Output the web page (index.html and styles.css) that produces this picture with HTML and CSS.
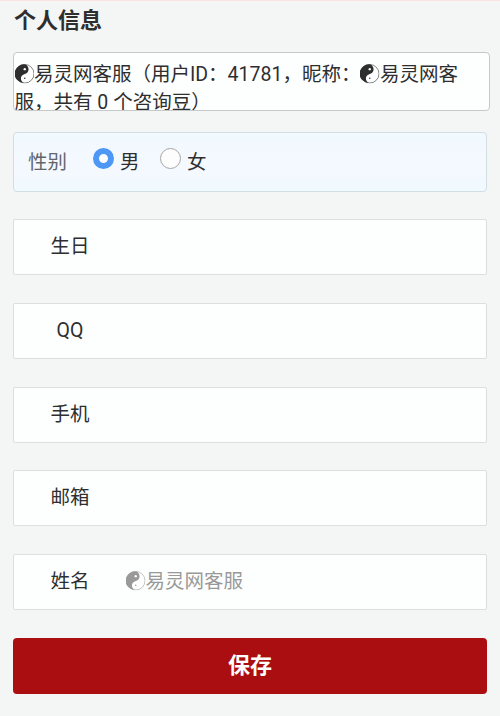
FILE: index.html
```html
<!DOCTYPE html>
<html lang="zh-CN">
<head>
    <meta charset="utf-8">
    <title>个人信息</title>
    <link rel="stylesheet" href="styles.css">
</head>
<body>
    <svg class="sprite" width="0" height="0">
        <symbol id="taiji" viewBox="0 0 20 20">
            <circle cx="10" cy="10" r="9.500" fill="#fff" stroke="currentColor" stroke-width="0.6"/>
            <path d="M11 0.600A9.500 9.500 0 1 0 9 19.400C5.500 17.500 4.500 12.500 9.500 10.500C14 9.500 16 4 11 0.600Z" fill="currentColor"/>
            <circle cx="10" cy="5.300" r="1.200" fill="#fff"/>
            <circle cx="10" cy="14.600" r="0.800" fill="currentColor"/>
        </symbol>
    </svg>
    <h2>个人信息</h2>
    <form>
        <div class="info"><svg class="taiji"><use href="#taiji"/></svg>易灵网客服（用户ID：41781，昵称：<svg class="taiji"><use href="#taiji"/></svg>易灵网客服，共有 0 个咨询豆）</div>
        <div class="sex">
            <span class="sex-title">性别</span>
            <label><input type="radio" name="sex" value="1" checked>男</label>
            <label><input type="radio" name="sex" value="2">女</label>
        </div>
        <div class="row">
            <label class="name" for="birthday">生日</label>
            <input class="text" type="text" id="birthday">
        </div>
        <div class="row">
            <label class="name" for="qq">QQ</label>
            <input class="text" type="text" id="qq">
        </div>
        <div class="row">
            <label class="name" for="mobile">手机</label>
            <input class="text" type="text" id="mobile">
        </div>
        <div class="row">
            <label class="name" for="email">邮箱</label>
            <input class="text" type="text" id="email">
        </div>
        <div class="row">
            <span class="name">姓名</span>
            <span class="nick"><svg class="taiji"><use href="#taiji"/></svg>易灵网客服</span>
        </div>
        <button class="save" type="button">保存</button>
    </form>
</body>
</html>
```
FILE: styles.css
```css
* {
    box-sizing: border-box;
}
body {
    margin: 0;
    padding: 0 13px;
    height: 716px;
    overflow: hidden;
    border-top: 1px solid #f6e3e2;
    background: #f4f5f5;
    color: #2e2e2e;
    font-family: Roboto, "Noto Sans CJK SC", sans-serif;
    font-size: 19.5px;
}
.sprite {
    display: block;
}
h2 {
    margin: 0 0 11px;
    padding-left: 1px;
    height: 40px;
    line-height: 40px;
    font-size: 22px;
}
.info {
    width: 477px;
    height: 59px;
    padding: 8px 20px 0 0.5px;
    overflow: hidden;
    border: 1px solid #c6c9c9;
    border-radius: 4px;
    background: #fdfefe;
    line-height: 27.5px;
}
.taiji {
    display: inline-block;
    width: 19.5px;
    height: 19.5px;
    vertical-align: -2.5px;
}
.sex {
    display: flex;
    height: 60px;
    margin: 21px 0 27px;
    padding-left: 14px;
    border: 1px solid #d3dde4;
    border-radius: 4px;
    background: linear-gradient(#f0faff, #f4f8ff 30%, #f4f8ff 75%, #effaff);
    line-height: 60px;
}
.sex-title {
    width: 65px;
    color: #62666c;
}
.sex label {
    display: flex;
    width: 67px;
}
.sex input {
    appearance: none;
    width: 21px;
    height: 21px;
    margin: 15px 6px 0 0;
    border: 1px solid #a5a5a5;
    border-radius: 50%;
    background: #fdfdfd;
}
.sex input:checked {
    border: 6px solid #4c98f4;
}
.row {
    display: flex;
    height: 56px;
    margin-bottom: 27.8px;
    border: 1px solid #dcdfdf;
    border-radius: 2px;
    background: #fdfefe;
    line-height: 53px;
}
.name {
    width: 112px;
    text-align: center;
}
.text {
    flex: 1;
    border: 0;
    background: none;
    font: inherit;
}
.nick {
    color: #999;
}
.save {
    display: block;
    width: 100%;
    height: 56px;
    padding: 0 0 6px;
    border: 0;
    border-radius: 4px;
    background: #aa0e10;
    color: #fff;
    font: bold 22px Roboto, "Noto Sans CJK SC", sans-serif;
}
```
